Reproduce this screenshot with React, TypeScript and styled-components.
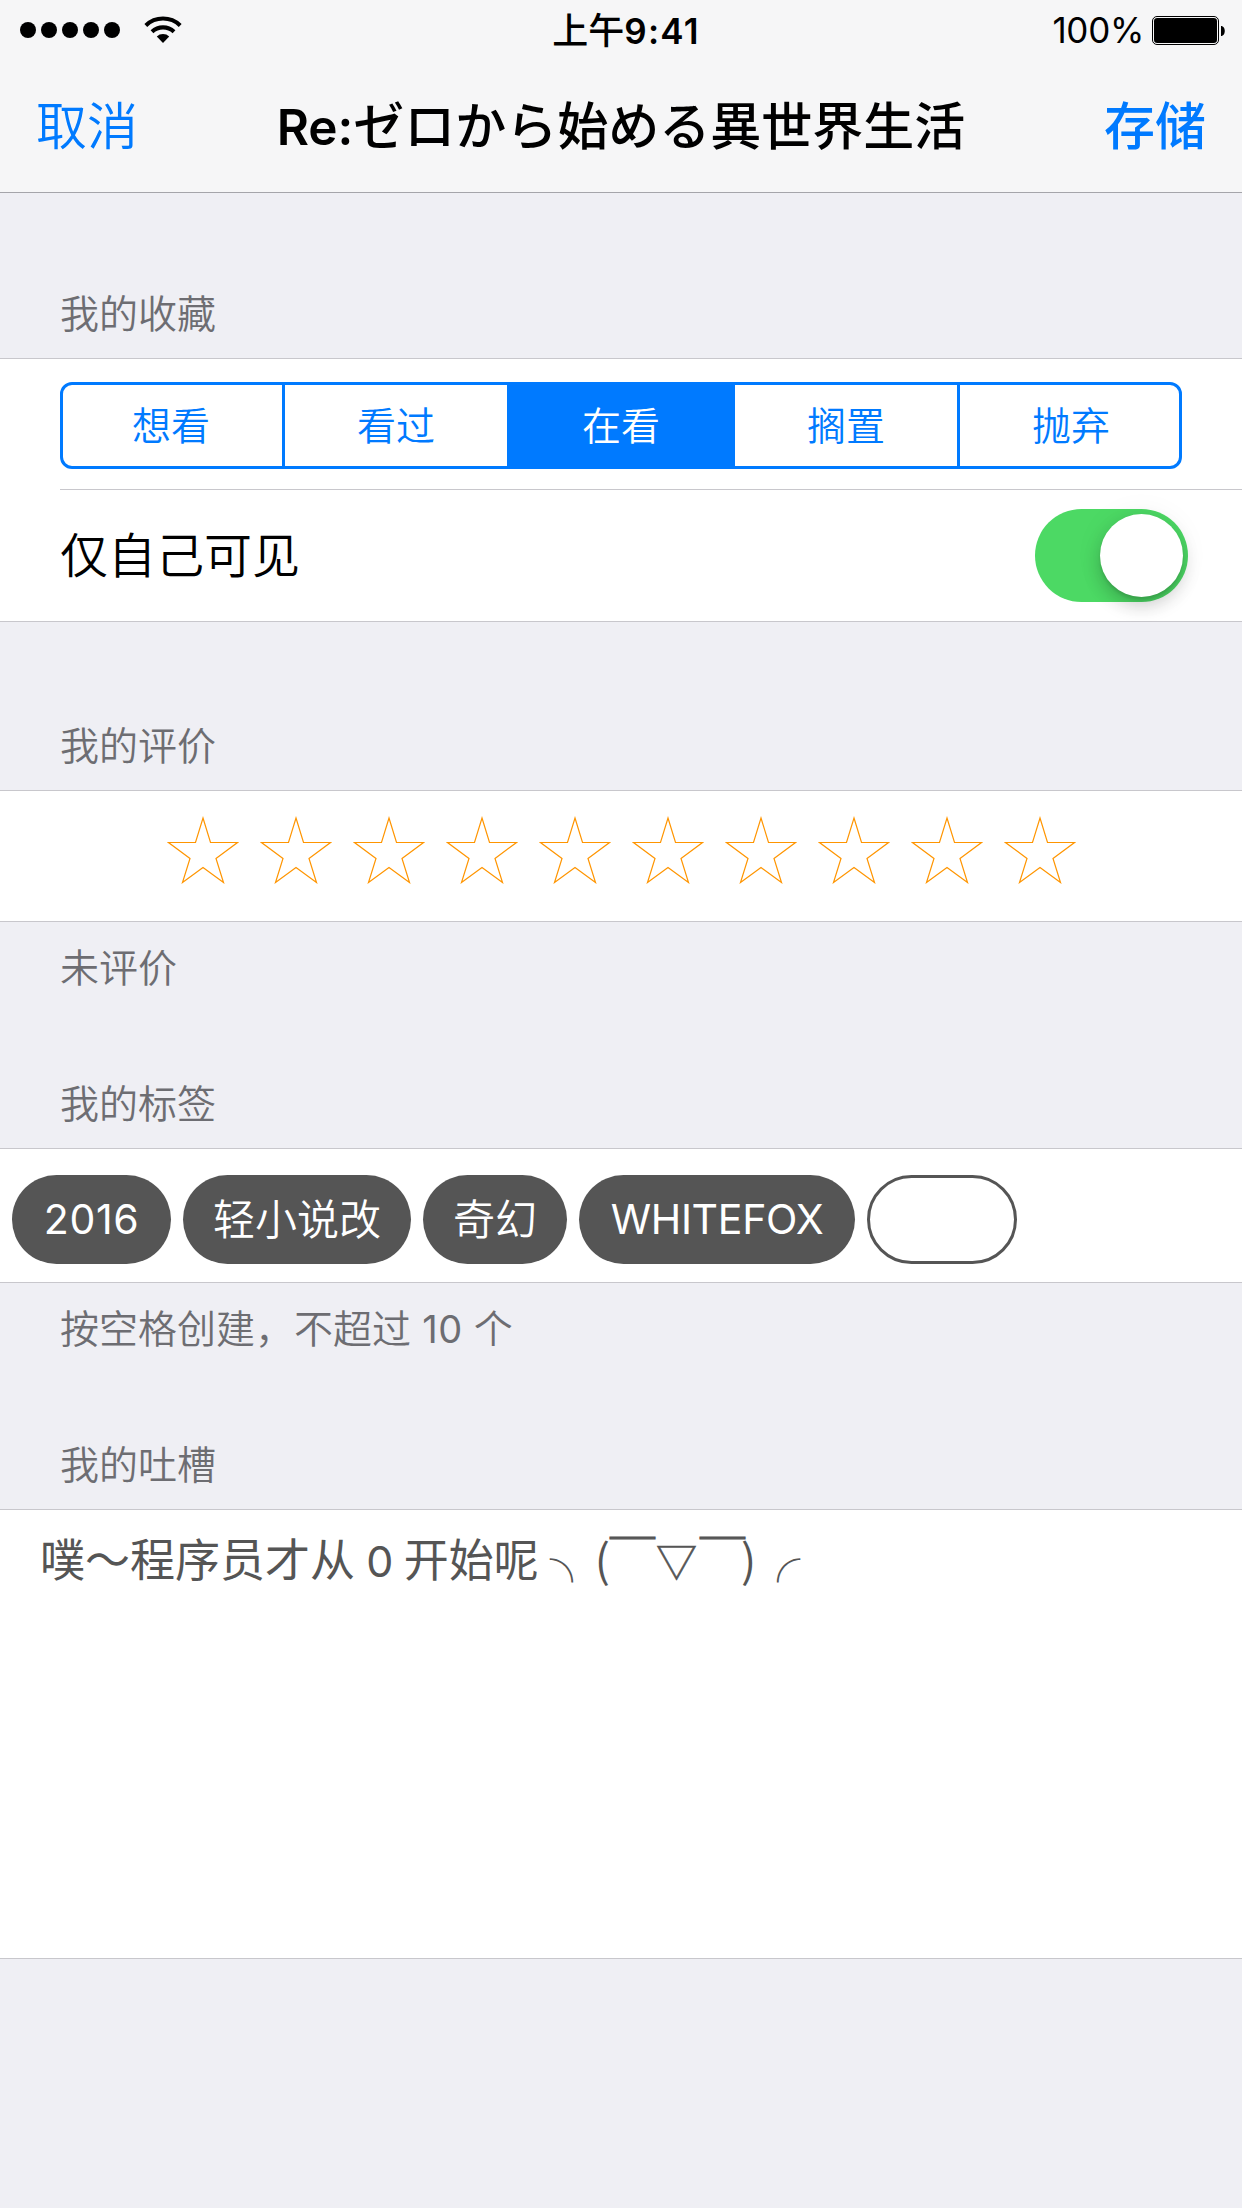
import React, { useState } from "react";
import styled, { createGlobalStyle, css } from "styled-components";

const color = {
  tint: "#007aff",
  ground: "#efeff4",
  hairline: "#c8c7cc",
  caption: "#6d6d72",
  tag: "#555555",
  star: "#ff9500",
  on: "#4cd964",
};

const GlobalStyle = createGlobalStyle`
  *, *::before, *::after { box-sizing: border-box; }
  body {
    margin: 0;
    background: ${color.ground};
    font-family: Inter, "Noto Sans CJK SC", sans-serif;
    font-weight: 350;
    color: #000;
  }
  button {
    margin: 0;
    padding: 0;
    border: 0;
    background: none;
    font: inherit;
    color: inherit;
  }
`;

const Screen = styled.div`
  display: flex;
  flex-direction: column;
  width: 1242px;
  height: 2208px;
  overflow: hidden;
  background: ${color.ground};
`;

const Header = styled.header`
  height: 193px;
  background: #f6f6f7;
  border-bottom: 1px solid #a5a5aa;
`;

const StatusBar = styled.div`
  display: grid;
  grid-template-columns: 1fr auto 1fr;
  align-items: center;
  height: 60px;
  padding: 0 17px 0 20px;
  line-height: 62px;
`;

const Signal = styled.div`
  display: flex;
  align-items: center;
  gap: 5px;
`;

const Dot = styled.i`
  width: 16px;
  height: 16px;
  border-radius: 50%;
  background: #000;
`;

const WifiIcon = styled.svg`
  width: 38px;
  height: 28px;
  margin-left: 19px;
`;

const Clock = styled.div`
  height: 60px;
  padding-left: 7px;
  font-size: 36px;
  font-weight: 500;
`;

const Power = styled.div`
  display: flex;
  justify-content: flex-end;
  align-items: center;
  gap: 8px;
  height: 60px;
`;

const BatteryIcon = styled.svg`
  width: 73px;
  height: 30px;
`;

const Latin = styled.span<{ $size: number; $track?: number; $weight?: number }>`
  font-size: ${(p) => p.$size}px;
  letter-spacing: ${(p) => p.$track ?? 0}px;
  font-weight: ${(p) => p.$weight ?? 400};
`;

const NavBar = styled.nav`
  display: grid;
  grid-template-columns: 1fr auto 1fr;
  height: 132px;
  padding: 0 36px;
  line-height: 134px;
  font-size: 51px;
`;

const Title = styled.h1`
  margin: 0;
  font: inherit;
  font-weight: 500;
  font-family: Inter, "Noto Sans CJK JP", sans-serif;
`;

const NavButton = styled.button<{ $strong?: boolean }>`
  justify-self: ${(p) => (p.$strong ? "end" : "start")};
  color: ${color.tint};
  font-weight: ${(p) => (p.$strong ? 500 : 350)};
`;

const Caption = styled.div<{ $height: number; $top: number }>`
  height: ${(p) => p.$height}px;
  padding: ${(p) => p.$top}px 60px 0;
  font-size: 39px;
  line-height: 56px;
  color: ${color.caption};
  white-space: pre;
`;

const Group = styled.section<{ $height: number }>`
  height: ${(p) => p.$height}px;
  background: #fff;
  border-top: 1px solid ${color.hairline};
  border-bottom: 1px solid ${color.hairline};
`;

const SegmentRow = styled.div`
  height: 131px;
  margin-left: 60px;
  padding-top: 23px;
  border-bottom: 1px solid ${color.hairline};
`;

const Segments = styled.div`
  display: grid;
  grid-template-columns: 222px 222px 228px 222px 222px;
  width: 1122px;
  height: 87px;
  border-radius: 12px;
  border: 3px solid ${color.tint};
  overflow: hidden;
`;

const Segment = styled.button<{ $active: boolean }>`
  font-size: 39px;
  line-height: 78px;
  color: ${color.tint};
  ${(p) =>
    p.$active
      ? css`
          background: ${color.tint};
          color: #fff;
        `
      : css`
          &:first-child {
            padding-right: 3px;
            border-right: 3px solid ${color.tint};
          }
          &:last-child {
            padding-left: 3px;
            border-left: 3px solid ${color.tint};
          }
        `}
`;

const SwitchRow = styled.label`
  display: flex;
  align-items: center;
  justify-content: space-between;
  height: 131px;
  padding: 0 54px 0 60px;
  font-size: 48px;
  line-height: 134px;
`;

const Track = styled.button`
  display: flex;
  align-items: center;
  justify-content: flex-end;
  width: 153px;
  height: 93px;
  padding: 0 5px;
  border-radius: 47px;
  background: ${color.on};
`;

const Knob = styled.span`
  width: 83px;
  height: 83px;
  border-radius: 50%;
  background: #fff;
  box-shadow: 0 9px 18px rgba(0, 0, 0, 0.18), 0 3px 3px rgba(0, 0, 0, 0.1),
    0 0 30px rgba(0, 0, 0, 0.06);
`;

const Rating = styled.div`
  display: flex;
  justify-content: center;
  gap: 21px;
  padding-top: 25px;
`;

const StarIcon = styled.svg`
  width: 72px;
  height: 68px;
`;

const TagRow = styled.div`
  display: flex;
  gap: 12px;
  padding: 26px 12px 0;
`;

const Tag = styled.div<{ $width: number; $latin?: boolean; $empty?: boolean }>`
  width: ${(p) => p.$width}px;
  height: 89px;
  border-radius: 45px;
  text-align: center;
  font-size: 42px;
  line-height: ${(p) => (p.$latin ? 87 : 89)}px;
  color: #fff;
  background: ${(p) => (p.$empty ? "#fff" : color.tag)};
  border: ${(p) => (p.$empty ? `3px solid ${color.tag}` : "0")};
`;

const Comment = styled.div`
  padding: 16px 40px 0;
  font-size: 45px;
  font-weight: 400;
  line-height: 64px;
  color: ${color.tag};
  white-space: pre;
`;

const Face = styled.span`
  margin-left: 1px;
  font-family: "Noto Sans CJK SC", sans-serif;
`;

const Brow = styled.span`
  -webkit-text-stroke: 1.2px ${color.tag};
`;

const Mouth = styled.span`
  margin: 0 3px 0 1px;
  font-size: 41px;
  -webkit-text-stroke: 0.6px ${color.tag};
`;

const Cheek = styled.span`
  margin-left: -4px;
  letter-spacing: -1px;
`;

const Star = () => (
  <StarIcon viewBox="0 0 72 68" fill="none" stroke={color.star} strokeWidth="1.2">
    <path d="M36 2L43.5 26.5H70.5L49 42.5L56.5 66.5L36 51.5L15.5 66.5L23 42.5L1.5 26.5H28.5Z" />
  </StarIcon>
);

const Wifi = () => (
  <WifiIcon viewBox="0 0 38 28">
    <g fill="none" stroke="#000" strokeWidth="4.1">
      <path d="M1.8 9.4A25 25 0 0 1 36.2 9.4" />
      <path d="M8 15.7A16.2 16.2 0 0 1 30 15.7" />
    </g>
    <path d="M12.8 20.6A9 9 0 0 1 25.2 20.6L19 27Z" />
  </WifiIcon>
);

const Battery = () => (
  <BatteryIcon viewBox="0 0 73 30">
    <rect x="0.5" y="1.5" width="66" height="28" rx="4.5" fill="none" stroke="#000" />
    <rect x="2" y="3" width="63" height="25" rx="3.3" />
    <path d="M69 11C74 11 74 21 69 21Z" />
  </BatteryIcon>
);

const states = ["想看", "看过", "在看", "搁置", "抛弃"];

export default function App() {
  const [state, setState] = useState(2);
  return (
    <>
      <GlobalStyle />
      <Screen>
        <Header>
          <StatusBar>
            <Signal>
              {[0, 1, 2, 3, 4].map((n) => (
                <Dot key={n} />
              ))}
              <Wifi />
            </Signal>
            <Clock>
              上午<Latin $size={35} $weight={600} $track={1.2}>9:41</Latin>
            </Clock>
            <Power>
              <Latin $size={35} $track={-0.3}>100%</Latin>
              <Battery />
            </Power>
          </StatusBar>
          <NavBar>
            <NavButton>取消</NavButton>
            <Title>
              <Latin $size={49.5} $weight={600}>Re:</Latin>ゼロから始める異世界生活
            </Title>
            <NavButton $strong>存储</NavButton>
          </NavBar>
        </Header>

        <Caption $height={165} $top={93}>我的收藏</Caption>
        <Group $height={264}>
          <SegmentRow>
            <Segments>
              {states.map((label, i) => (
                <Segment key={label} $active={i === state} onClick={() => setState(i)}>
                  {label}
                </Segment>
              ))}
            </Segments>
          </SegmentRow>
          <SwitchRow>
            仅自己可见
            <Track role="switch" aria-checked="true">
              <Knob />
            </Track>
          </SwitchRow>
        </Group>

        <Caption $height={168} $top={96}>我的评价</Caption>
        <Group $height={132}>
          <Rating>
            {Array.from({ length: 10 }, (_, n) => (
              <Star key={n} />
            ))}
          </Rating>
        </Group>
        <Caption $height={91} $top={18}>未评价</Caption>

        <Caption $height={135} $top={63}>我的标签</Caption>
        <Group $height={135}>
          <TagRow>
            <Tag $width={159} $latin><Latin $size={41} $track={0.6}>2016</Latin></Tag>
            <Tag $width={228}>轻小说改</Tag>
            <Tag $width={144}>奇幻</Tag>
            <Tag $width={276} $latin><Latin $size={41} $track={-0.3}>WHITEFOX</Latin></Tag>
            <Tag $width={150} $empty />
          </TagRow>
        </Group>
        <Caption $height={91} $top={18}>
          按空格创建，不超过<Latin $size={38} $track={0.5}> 10 </Latin>个
        </Caption>

        <Caption $height={135} $top={63}>我的吐槽</Caption>
        <Group $height={450}>
          <Comment>
            噗～程序员才从<Latin $size={43} $track={-0.9}> 0 </Latin>开始呢
            <Face> ╮(<Brow>￣</Brow><Mouth>▽</Mouth><Brow>￣</Brow><Cheek>)╭</Cheek></Face>
          </Comment>
        </Group>
      </Screen>
    </>
  );
}
